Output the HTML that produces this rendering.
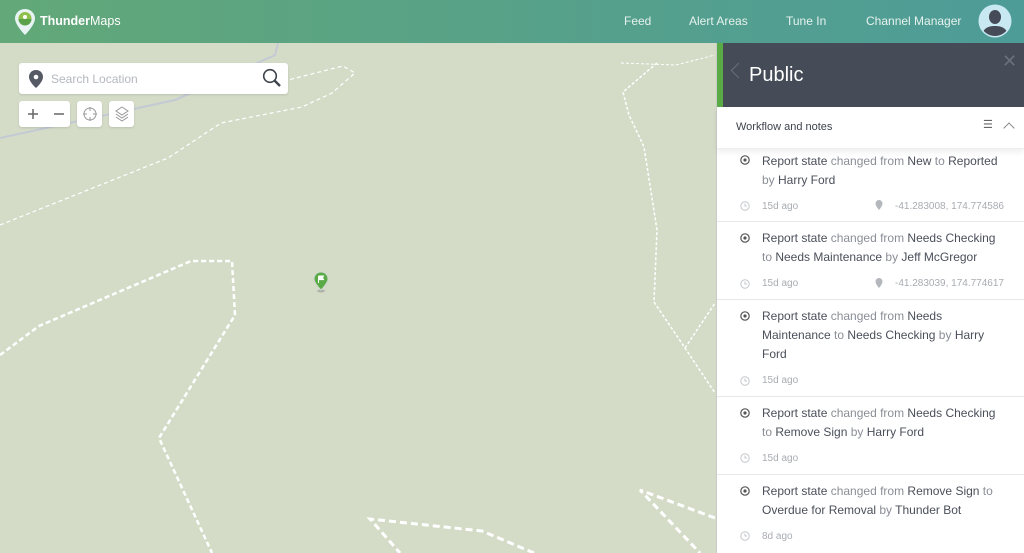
<!DOCTYPE html><html><head><style>
*{margin:0;padding:0;box-sizing:border-box}
body{width:1024px;height:553px;overflow:hidden;position:relative;font-family:"Liberation Sans",sans-serif;background:#d4dcc8}
.hdr{position:absolute;left:0;top:0;width:1024px;height:43px;background:linear-gradient(90deg,#62a878,#55a08c 60%,#4e9c98)}
.nav{position:absolute;top:14px;color:#e6f2ee;font-size:12px}
.box{position:absolute;background:#fff;border-radius:3px;box-shadow:0 1px 2px rgba(0,0,0,.12)}
.panel{position:absolute;left:716px;top:43px;width:308px;height:510px;background:#fff;border-left:1px solid #c8ccc8}
.ph{position:absolute;left:0;top:0;width:308px;height:64px;background:#454b57;border-left:6px solid #5aaa46}
.item{position:absolute;left:0;width:307px;border-bottom:1px solid #e6e8ea}
.t{position:absolute;left:45px;font-size:12px;line-height:19px;color:#8a8e96}
.t b{font-weight:normal;color:#4a4f5a}
.m{position:absolute;font-size:10px;color:#a8acb2}
</style></head><body>
<svg width="716" height="553" style="position:absolute;left:0;top:0" fill="none">
<polyline points="0,138 175,100 275,55 278,43" stroke="#c4cad4" stroke-width="2"/>
<polyline points="0,225 168,158 221,123 302,107 332,93 355,73 343,66 288,80" stroke="#fff" stroke-width="1.2" stroke-dasharray="4,3"/>
<polyline points="621,63 676,65 715,55" stroke="#fff" stroke-width="1" stroke-dasharray="3,2"/>
<polyline points="657,63 623,92 629,115 644,147 657,230 654,302 685,348 715,393" stroke="#fff" stroke-width="1.5" stroke-dasharray="3,2"/>
<polyline points="685,348 715,303" stroke="#fff" stroke-width="1.5" stroke-dasharray="3,2"/>
<polyline points="0,355 39,326 191,261 232,261 235,315 159,438 212,553" stroke="#fff" stroke-width="2.5" stroke-dasharray="5,3"/>
<polyline points="715,518 640,490 700,553" stroke="#fff" stroke-width="3" stroke-dasharray="7,4"/>
<polyline points="534,553 482,531 370,519 400,553" stroke="#fff" stroke-width="3" stroke-dasharray="7,4"/>
</svg>
<div class="hdr"></div>
<svg style="position:absolute;left:14px;top:8px" width="22" height="28" viewBox="0 0 22 28"><path d="M11 1C5.5 1 1 5.3 1 10.5 1 17 11 27 11 27S21 17 21 10.5C21 5.3 16.5 1 11 1z" fill="#e8f4f4"/><circle cx="11" cy="10.5" r="6.5" fill="#8fc04a"/><path d="M4.5 11a6.5 6.5 0 0 0 13 0z" fill="#5aa24a"/><circle cx="11" cy="9" r="2" fill="#fff"/></svg>
<div style="position:absolute;left:40px;top:14px;color:#fff;font-size:12.5px;"><b>Thunder</b>Maps</div>
<div class="nav" style="left:624px">Feed</div>
<div class="nav" style="left:689px">Alert Areas</div>
<div class="nav" style="left:786px">Tune In</div>
<div class="nav" style="left:866px">Channel Manager</div>
<svg style="position:absolute;left:978px;top:4px" width="34" height="34" viewBox="0 0 34 34"><circle cx="17" cy="17" r="16.5" fill="#c8e8f2"/><clipPath id="c"><circle cx="17" cy="17" r="15"/></clipPath><g clip-path="url(#c)" fill="#454b57"><ellipse cx="17" cy="13" rx="6" ry="7"/><path d="M4 34c0-9 5-12 13-12s13 3 13 12z"/></g></svg>
<div class="box" style="left:19px;top:63px;width:269px;height:31px"></div>
<svg style="position:absolute;left:29px;top:70px" width="14" height="18" viewBox="0 0 14 18"><path d="M7 0C3 0 0 3 0 7c0 5 7 11 7 11s7-6 7-11C14 3 11 0 7 0z" fill="#555a64"/><circle cx="7" cy="7" r="2.3" fill="#fff"/></svg>
<div style="position:absolute;left:51px;top:72px;font-size:12px;color:#b4b8be">Search Location</div>
<svg style="position:absolute;left:262px;top:68px" width="20" height="20" viewBox="0 0 20 20" fill="none" stroke="#3e434c" stroke-width="1.6"><circle cx="8" cy="8" r="6.3"/><path d="M12.5 12.5L18 18" stroke-width="2.4"/></svg>
<div class="box" style="left:19px;top:101px;width:51px;height:26px"></div>
<svg style="position:absolute;left:19px;top:101px" width="51" height="26" stroke="#666" stroke-width="1.5"><path d="M14 8v10M9 13h10M35 13h10"/></svg>
<div class="box" style="left:77px;top:101px;width:25px;height:26px"></div>
<svg style="position:absolute;left:82px;top:106px" width="16" height="16" fill="none" stroke="#999"><circle cx="8" cy="8" r="6"/><path d="M8 1v4M8 11v4M1 8h4M11 8h4"/></svg>
<div class="box" style="left:109px;top:101px;width:25px;height:26px"></div>
<svg style="position:absolute;left:114px;top:105px" width="16" height="18" fill="none" stroke="#999"><path d="M8 2l6 4-6 4-6-4z"/><path d="M2 9l6 4 6-4M2 12l6 4 6-4"/></svg>
<svg style="position:absolute;left:313px;top:271px" width="16" height="22" viewBox="0 0 16 22"><ellipse cx="8" cy="20" rx="4" ry="1.5" fill="#888" opacity=".5"/><path d="M8 1C4 1 1 4 1 8c0 4 7 11 7 11s7-7 7-11c0-4-3-7-7-7z" fill="#5aaa46" stroke="#cfd8cf"/><path d="M5.5 5v7M5.5 5h5l-1 1.8 1 1.8h-5" fill="#fff" stroke="#fff" stroke-width="1"/></svg>
<div class="panel">
<div class="ph"><div style="position:absolute;left:10px;top:22px;width:11px;height:11px;border-left:1.5px solid #6a707c;border-bottom:1.5px solid #6a707c;transform:rotate(45deg)"></div>
<div style="position:absolute;left:26px;top:21px;color:#fff;font-size:20px">Public</div>
<div style="position:absolute;left:279px;top:8px;color:#6a707c;font-size:18px">✕</div></div>
<div style="position:absolute;left:0;top:64px;width:307px;height:42px;box-shadow:0 3px 6px rgba(0,0,0,.07);border-bottom:1px solid #eee"><div style="position:absolute;left:19px;top:14px;font-size:11px;color:#3e434c">Workflow and notes</div>
<div style="position:absolute;left:266px;top:11px;font-size:11px;color:#666">☰</div><div style="position:absolute;left:288px;top:17px;width:8px;height:8px;border-left:1.3px solid #888;border-top:1.3px solid #888;transform:rotate(45deg)"></div></div>
<div class="item" style="top:107px;height:72px"><div class="t" style="top:2px"><b>Report state</b> changed from <b>New</b> to <b>Reported</b><br>by <b>Harry Ford</b></div><div class="m" style="left:45px;top:51px">15d ago</div><div class="m" style="left:178px;top:51px">-41.283008, 174.774586</div></div>
<div class="item" style="top:179px;height:78px"><div class="t" style="top:7px"><b>Report state</b> changed from <b>Needs Checking</b><br>to <b>Needs Maintenance</b> by <b>Jeff McGregor</b></div><div class="m" style="left:45px;top:56px">15d ago</div><div class="m" style="left:178px;top:56px">-41.283039, 174.774617</div></div>
<div class="item" style="top:257px;height:97px"><div class="t" style="top:7px"><b>Report state</b> changed from <b>Needs</b><br><b>Maintenance</b> to <b>Needs Checking</b> by <b>Harry</b><br><b>Ford</b></div><div class="m" style="left:45px;top:75px">15d ago</div></div>
<div class="item" style="top:354px;height:78px"><div class="t" style="top:7px"><b>Report state</b> changed from <b>Needs Checking</b><br>to <b>Remove Sign</b> by <b>Harry Ford</b></div><div class="m" style="left:45px;top:56px">15d ago</div></div>
<div class="item" style="top:432px;height:78px;border:none"><div class="t" style="top:7px"><b>Report state</b> changed from <b>Remove Sign</b> to<br><b>Overdue for Removal</b> by <b>Thunder Bot</b></div><div class="m" style="left:45px;top:56px">8d ago</div></div>
</div>
<svg width="20" height="553" style="position:absolute;left:738px;top:0" fill="none">
<g stroke="#555" stroke-width="1.2"><circle cx="7" cy="160" r="4.2"/><circle cx="7" cy="238" r="4.2"/><circle cx="7" cy="316" r="4.2"/><circle cx="7" cy="413" r="4.2"/><circle cx="7" cy="491" r="4.2"/></g>
<g fill="#555"><circle cx="7" cy="160" r="1.6"/><circle cx="7" cy="238" r="1.6"/><circle cx="7" cy="316" r="1.6"/><circle cx="7" cy="413" r="1.6"/><circle cx="7" cy="491" r="1.6"/></g>
<g stroke="#c4c7cc"><circle cx="7" cy="206" r="4.2"/><circle cx="7" cy="284" r="4.2"/><circle cx="7" cy="381" r="4.2"/><circle cx="7" cy="458" r="4.2"/><circle cx="7" cy="536" r="4.2"/>
<path d="M7 203.5v2.5h2M7 281.5v2.5h2M7 378.5v2.5h2M7 455.5v2.5h2M7 533.5v2.5h2"/></g>
</svg>
<svg width="12" height="300" style="position:absolute;left:873px;top:195px"><g fill="#b4b8bc"><path d="M6 5a3.5 3.5 0 0 1 3.5 3.5C9.5 11 6 15 6 15S2.5 11 2.5 8.5A3.5 3.5 0 0 1 6 5z"/><path d="M6 83a3.5 3.5 0 0 1 3.5 3.5C9.5 89 6 93 6 93S2.5 89 2.5 86.5A3.5 3.5 0 0 1 6 83z"/></g></svg>
</body></html>
